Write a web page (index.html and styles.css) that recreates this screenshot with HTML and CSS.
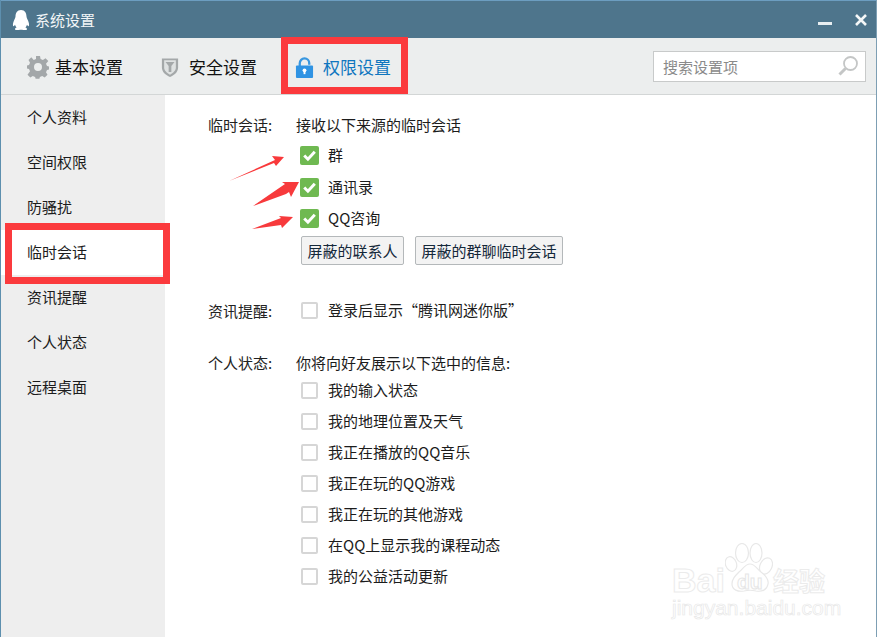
FILE: index.html
```html
<!DOCTYPE html>
<html lang="zh">
<head>
<meta charset="utf-8">
<title>系统设置</title>
<link rel="stylesheet" href="styles.css">
</head>
<body>
<div class="window">
  <header class="titlebar">
    <svg class="penguin" width="18" height="22" viewBox="0 0 18 22"><path fill="#fff" d="M9 1C5 1 3.600 4 3.500 7.500 3.400 9 2.600 10 2 11.500 1 13.800.6 16 1.200 17c.5.6 1.200-.2 1.800-1.200.3 1 .8 1.900 1.600 2.600-1 .4-1.800 1-1.600 1.800.3 1 3 1 5 .5h2c2 .5 4.700.5 5-.5.2-.8-.6-1.400-1.600-1.800.8-.7 1.300-1.600 1.600-2.600.6 1 1.300 1.800 1.800 1.200.6-1 .2-3.200-.8-5.500-.6-1.500-1.400-2.500-1.500-4C14.400 4 13 1 9 1z"/></svg>
    <span class="app-title">系统设置</span>
    <div class="win-controls">
      <svg width="14" height="14" viewBox="0 0 14 14"><rect x="0" y="9" width="14" height="3" fill="#e8eef1"/></svg>
      <svg width="14" height="14" viewBox="0 0 14 14"><path d="M2 2l10 10M12 2L2 12" stroke="#f4f7f8" stroke-width="2.600"/></svg>
    </div>
  </header>
  <nav class="toolbar">
    <div class="tab tab-basic">
      <svg width="22" height="23" viewBox="0 0 22 23"><path fill="#a3a7a9" fill-rule="evenodd" d="M9 1h4l.6 3 2.300 1 2.600-1.700 2.800 2.800L19 8.700l1 2.300 2 .6v2.800l-2 .6-1 2.300 1.500 2.500-2.800 2.800-2.500-1.600-2.300.9-.5 1.900h-3.800l-.5-1.900-2.300-.9-2.500 1.600-2.800-2.800L3 16.300l-1-2.300-2-.6v-2.800l2-.6 1-2.300-1.500-2.600 2.800-2.800L6.700 5 9 4zM11 8a4 4 0 100 8 4 4 0 000-8z" transform="translate(0 -1)"/></svg>
      <span>基本设置</span>
    </div>
    <div class="tab tab-safe">
      <svg width="18" height="22" viewBox="0 0 20 23"><path fill="#a4a8a9" d="M1 2h18v10c0 5-4 8.500-9 10.500C5 20.500 1 17 1 12z"/><path fill="#dfe2e2" d="M3.500 4h13v8c0 3.500-3 6-6.500 8-3.500-2-6.500-4.500-6.500-8z"/><path fill="#a4a8a9" d="M5 6h10l-3.500 4.500V17h-3v-6.500z"/></svg>
      <span>安全设置</span>
    </div>
    <div class="tab tab-perm">
      <svg width="19" height="21" viewBox="0 0 20 22"><path fill="none" stroke="#3897e0" stroke-width="2.400" d="M5 10V6.500a5 5 0 0110 0V8"/><rect x="1" y="9" width="18" height="13" rx="1" fill="#2f93e3"/><circle cx="10" cy="14" r="2" fill="#fff"/><rect x="9" y="14" width="2" height="4" fill="#fff"/></svg>
      <span>权限设置</span>
    </div>
    <div class="search">
      <span>搜索设置项</span>
      <svg width="22" height="22" viewBox="0 0 22 22"><circle cx="13.500" cy="8.500" r="6.500" fill="none" stroke="#c4c6c6" stroke-width="1.800"/><path d="M8.500 13.500L2.500 19.500" stroke="#c4c6c6" stroke-width="3"/></svg>
    </div>
  </nav>
  <div class="body">
    <aside class="sidebar">
      <div class="side-item">个人资料</div>
      <div class="side-item">空间权限</div>
      <div class="side-item">防骚扰</div>
      <div class="side-item active">临时会话</div>
      <div class="side-item">资讯提醒</div>
      <div class="side-item">个人状态</div>
      <div class="side-item">远程桌面</div>
    </aside>
    <main class="content">
      <section class="group">
        <div class="label">临时会话:</div>
        <div class="col">
          <div class="head">接收以下来源的临时会话</div>
          <div class="check on"><i class="box"><svg width="19" height="19" viewBox="0 0 18 18"><path d="M4 9l3.500 3.500L14 5.500" fill="none" stroke="#fff" stroke-width="2.800"/></svg></i>群</div>
          <div class="check on"><i class="box"><svg width="19" height="19" viewBox="0 0 18 18"><path d="M4 9l3.500 3.500L14 5.500" fill="none" stroke="#fff" stroke-width="2.800"/></svg></i>通讯录</div>
          <div class="check on"><i class="box"><svg width="19" height="19" viewBox="0 0 18 18"><path d="M4 9l3.500 3.500L14 5.500" fill="none" stroke="#fff" stroke-width="2.800"/></svg></i>QQ咨询</div>
          <div class="buttons">
            <button class="btn">屏蔽的联系人</button>
            <button class="btn">屏蔽的群聊临时会话</button>
          </div>
        </div>
      </section>
      <section class="group news">
        <div class="label row-label">资讯提醒:</div>
        <div class="col">
          <div class="check"><i class="box"></i>登录后显示“腾讯网迷你版”</div>
        </div>
      </section>
      <section class="group status">
        <div class="label">个人状态:</div>
        <div class="col">
          <div class="head">你将向好友展示以下选中的信息:</div>
          <div class="check"><i class="box"></i>我的输入状态</div>
          <div class="check"><i class="box"></i>我的地理位置及天气</div>
          <div class="check"><i class="box"></i>我正在播放的QQ音乐</div>
          <div class="check"><i class="box"></i>我正在玩的QQ游戏</div>
          <div class="check"><i class="box"></i>我正在玩的其他游戏</div>
          <div class="check"><i class="box"></i>在QQ上显示我的课程动态</div>
          <div class="check"><i class="box"></i>我的公益活动更新</div>
        </div>
      </section>
    </main>
  </div>
  <div class="hl hl-tab"></div>
  <div class="hl hl-side"></div>
  <svg class="arrows" width="877" height="637" viewBox="0 0 877 637">
    <path fill="#f9393b" d="M229 181l46-21-3-4 12 1-8 9-2-3z"/>
    <path fill="#f73a3c" d="M253 206l32-22-3-2 17 0-8 15-2-5-3 2z"/>
    <path fill="#f73a3c" d="M252 229l29-11-2-2 14 1-11 11-1-3z"/>
  </svg>
  <div class="watermark">
    <svg class="paw" width="48" height="50" viewBox="0 0 48 50">
      <g fill="#fff" stroke="#e8e8e8" stroke-width="1.200">
        <ellipse cx="6" cy="21" rx="5.500" ry="7.500" transform="rotate(-20 6 21)"/>
        <ellipse cx="17" cy="10" rx="6.500" ry="9.500"/>
        <ellipse cx="31" cy="10" rx="6" ry="9.500"/>
        <ellipse cx="41" cy="23" rx="6" ry="8.500" transform="rotate(25 41 23)"/>
        <path d="M25 21c5 0 7 5 11 8 5 4 8 8 7 12-1 6-6 8-12 7-4-1-8-1-12 0-6 1-12-1-12-7 0-5 3-8 7-12 4-3 6-8 11-8z"/>
      </g>
    </svg>
    <div class="wm-top"><span class="wm-bai">Bai</span><span class="wm-du">du</span><span class="wm-cn">经验</span></div>
    <div class="wm-url">jingyan.baidu.com</div>
  </div>
</div>
</body>
</html>
```
FILE: styles.css
```css
* { box-sizing: border-box; }
html, body { margin: 0; padding: 0; }
body {
  width: 877px;
  height: 637px;
  overflow: hidden;
  font-family: "Noto Sans CJK SC", "Liberation Sans", sans-serif;
  font-size: 15px;
  color: #1c1c1c;
  background: #fff;
}
.window {
  position: relative;
  width: 877px;
  height: 637px;
  display: flex;
  flex-direction: column;
  border-left: 1px solid #5d8fae;
  border-right: 1px solid #7d9fb4;
  overflow: hidden;
}
.titlebar {
  height: 38px;
  flex: none;
  background: #4e758c;
  border-top: 1px solid #6c9dc0;
  display: flex;
  align-items: center;
  padding: 0 8px 0 11px;
  color: #fff;
}
.penguin { margin-right: 5px; }
.app-title { font-size: 15px; color: #f2f5f7; }
.win-controls {
  margin-left: auto;
  display: flex;
  gap: 22px;
  align-items: center;
}
.toolbar {
  height: 57px;
  flex: none;
  background: #eceeee;
  border-bottom: 1px solid #d3d6d6;
  display: flex;
  align-items: center;
  font-size: 17px;
  color: #111;
}
.tab { display: flex; align-items: center; padding-top: 2px; }
.tab span { line-height: 22px; }
.tab-basic { margin-left: 26px; gap: 6px; }
.tab-safe { margin-left: 38px; gap: 10px; }
.tab-perm { margin-left: 38px; gap: 9px; color: #0f76bf; }
.search {
  margin-left: auto;
  margin-right: 10px;
  width: 213px;
  height: 31px;
  background: #fff;
  border: 1px solid #c8caca;
  display: flex;
  align-items: center;
  justify-content: space-between;
  padding: 0 6px 0 9px;
  font-size: 15px;
  color: #8a8a8a;
}
.body { flex: 1; display: flex; min-height: 0; }
.sidebar {
  width: 164px;
  flex: none;
  background: #eeeeee;
}
.side-item {
  height: 45px;
  line-height: 43px;
  padding-left: 26px;
}
.side-item.active { background: #fff; }
.content {
  flex: 1;
  padding: 18px 0 0 43px;
  background: #fff;
}
.group { display: flex; line-height: 24px; }
.label { width: 88px; flex: none; color: #222; }
.row-label { line-height: 31px; }
.col { display: flex; flex-direction: column; }
.head { height: 24px; }
.check {
  height: 31px;
  display: flex;
  align-items: center;
  padding: 0 0 2px 5px;
}
.box {
  width: 17px;
  height: 17px;
  border: 2px solid #d6d6d6;
  margin: 2px 10px 0 0;
  border-radius: 2px;
  display: block;
  background: #fff;
  flex: none;
}
.check.on { padding-left: 4px; }
.check.on .box {
  width: 19px;
  height: 19px;
  background: #6fb951;
  border: 0;
  margin-right: 9px;
}
.check.on .box svg { display: block; }
.head + .check.on { margin-top: 3px; }
.head + .check.on + .check.on { margin-top: 1px; }
.buttons {
  display: flex;
  gap: 11px;
  padding-left: 5px;
  margin-top: 2px;
}
.btn {
  height: 29px;
  padding: 0 5.5px;
  font: inherit;
  color: #14283a;
  background: #f3f3f3;
  border: 1px solid #b4b8ba;
  border-radius: 2px;
}
.news { margin-top: 30px; }
.status { margin-top: 25px; }
.hl {
  position: absolute;
  border: 7px solid #fb3a3d;
}
.hl-tab { left: 280px; top: 37px; width: 127px; height: 57px; }
.hl-side { left: 4px; top: 223px; width: 165px; height: 61px; }
.arrows { position: absolute; left: -1px; top: 0; pointer-events: none; }
.watermark {
  position: absolute;
  left: 671px;
  top: 542px;
  width: 160px;
  height: 80px;
}
.paw { position: absolute; left: 53px; top: 1px; }
.wm-top {
  position: absolute;
  left: 0;
  top: 18px;
  white-space: nowrap;
  font-family: "Liberation Sans", sans-serif;
  font-weight: bold;
}
.wm-bai {
  font-size: 34px;
  line-height: 40px;
  color: #fff;
  -webkit-text-stroke: 1px #ebebeb;
}
.wm-du {
  position: absolute;
  left: 65px;
  top: 11px;
  font-size: 21px;
  line-height: 22px;
  color: #fff;
  -webkit-text-stroke: 1px #e6e6e6;
}
.wm-cn {
  position: absolute;
  left: 101px;
  top: 5px;
  font-family: "Noto Sans CJK SC", sans-serif;
  font-size: 26px;
  line-height: 30px;
  color: #fff;
  -webkit-text-stroke: 1px #ebebeb;
}
.wm-url {
  position: absolute;
  left: 0;
  top: 55px;
  font-family: "Liberation Sans", sans-serif;
  font-size: 21px;
  line-height: 22px;
  color: #fff;
  -webkit-text-stroke: .7px #e8e8e8;
  white-space: nowrap;
}
```
